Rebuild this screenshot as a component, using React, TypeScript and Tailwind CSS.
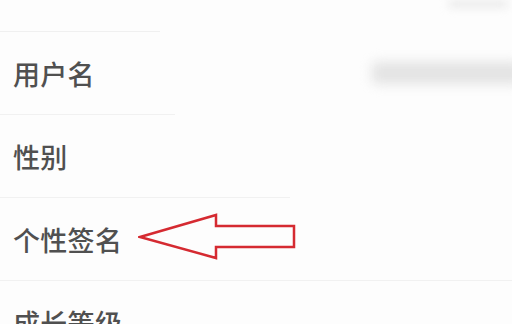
import React from 'react';

const rows = [
  { label: '用户名', divider: 'w-[175px]', value: true },
  { label: '性别', divider: 'w-[290px]', value: false },
  { label: '个性签名', divider: 'w-full', value: false, arrow: true },
  { label: '成长等级', divider: 'w-full', value: false },
];

function Arrow() {
  return (
    <svg width="170" height="50" viewBox="0 0 170 50" className="ml-[16px] mt-[-2px]">
      <path
        d="M2 24 L78 2 L78 13 L156 13 L156 34 L78 34 L78 45 Z"
        fill="none"
        stroke="#d52a31"
        strokeWidth="2.5"
        strokeLinejoin="miter"
      />
    </svg>
  );
}

export default function App() {
  return (
    <div
      className="w-[512px] h-[324px] overflow-hidden bg-[#fdfdfd] text-[#505050]"
      style={{ fontFamily: '"Noto Sans CJK SC", "Noto Sans", sans-serif' }}
    >
      {/* top strip */}
      <div className="h-[31px] flex justify-end">
        <div className="w-[60px] h-[8px] mr-[4px] rounded-full bg-[#ebebeb] blur-[4px]" />
      </div>
      <div className="h-px w-[160px] bg-[#f0f0f0]" />

      {rows.map((r) => (
        <div key={r.label}>
          <div className="h-[82px] flex items-center pl-[13px]">
            <span className="text-[27px] font-medium tracking-[0.3px] leading-none">{r.label}</span>
            {r.arrow && <Arrow />}
            {r.value && (
              <div className="ml-auto mr-[-10px] w-[150px] h-[22px] bg-[#e3e3e3] blur-[6px] rounded" />
            )}
          </div>
          <div className={`h-px ${r.divider} bg-[#f1f1f1]`} />
        </div>
      ))}
    </div>
  );
}
